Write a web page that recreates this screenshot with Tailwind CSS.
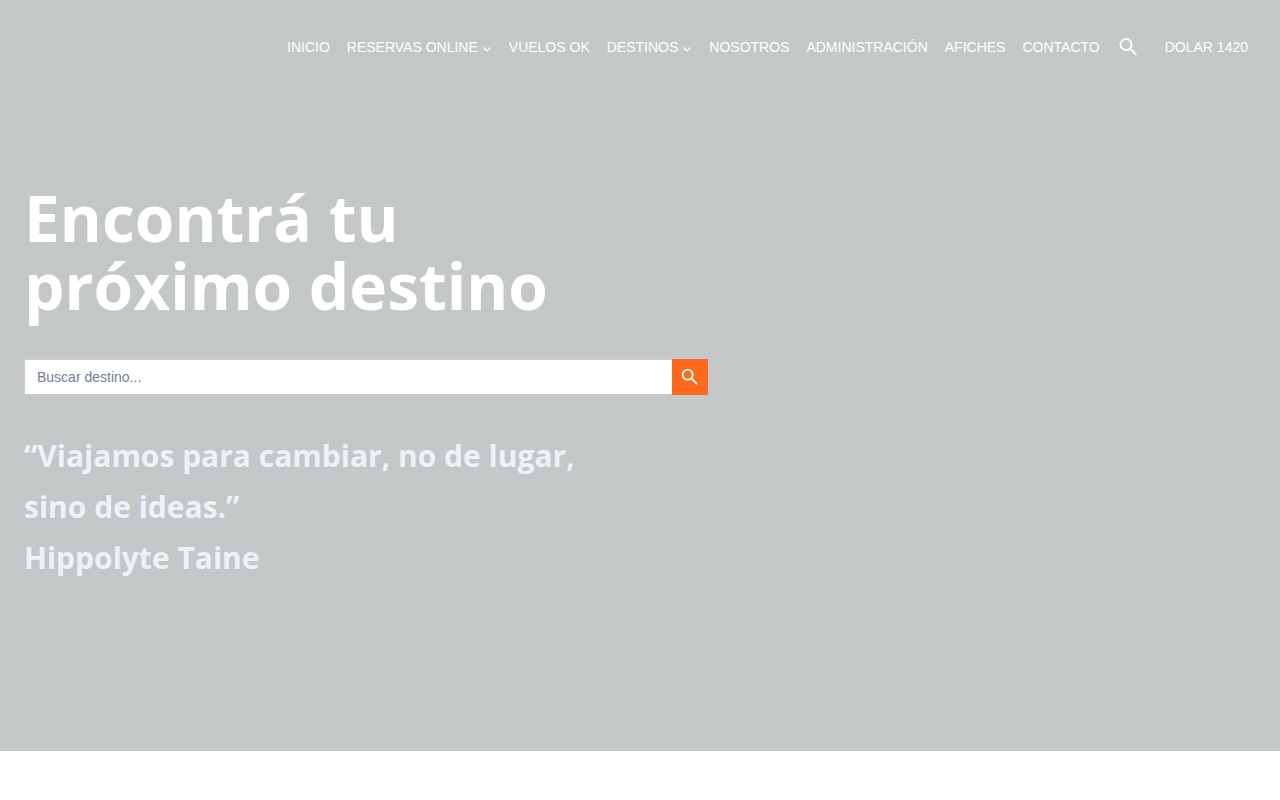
<!DOCTYPE html>
<html lang="es">
<head>
    <meta charset="UTF-8">
    <meta name="viewport" content="width=device-width, initial-scale=1.0">
    <title>Encontrá tu próximo destino</title>
    <script src="https://cdn.jsdelivr.net/npm/@tailwindcss/browser@4"></script>
</head>
<body class="bg-white font-['Liberation_Sans',Arial,sans-serif]">

<div class="bg-[#c3c7c8] pb-[168px]">
    <!-- Header -->
    <header class="flex justify-end px-8 pt-[29px]">
        <nav class="flex items-center h-9 gap-[17px] text-sm text-white whitespace-nowrap">
            <a href="#">INICIO</a>
            <a href="#" class="flex items-center gap-1">RESERVAS ONLINE
                <svg class="w-[10px] h-[11px] mt-1" viewBox="0 0 10 11" fill="none" stroke="currentColor" stroke-width="1.2"><path d="M1.5 3.5l3.5 3.5 3.5-3.5"/></svg>
            </a>
            <a href="#">VUELOS OK</a>
            <a href="#" class="flex items-center gap-1">DESTINOS
                <svg class="w-[10px] h-[11px] mt-1" viewBox="0 0 10 11" fill="none" stroke="currentColor" stroke-width="1.2"><path d="M1.5 3.5l3.5 3.5 3.5-3.5"/></svg>
            </a>
            <a href="#">NOSOTROS</a>
            <a href="#">ADMINISTRACIÓN</a>
            <a href="#">AFICHES</a>
            <a href="#">CONTACTO</a>
            <a href="#" aria-label="Buscar" class="mr-2">
                <svg class="w-[23px] h-6" viewBox="0 0 23 24" fill="currentColor"><path d="M15 14h-.79l-.28-.27A6.47 6.47 0 0 0 15.5 9.5 6.5 6.5 0 1 0 9 16c1.61 0 3.09-.59 4.23-1.57l.27.28v.79l5 4.99L19.99 19l-4.99-5zm-6 0C6.51 14 4.5 11.99 4.5 9.5S6.51 5 9 5s4.5 2.01 4.5 4.5S11.49 14 9 14z"/></svg>
            </a>
            <a href="#">DOLAR 1420</a>
        </nav>
    </header>

    <!-- Hero -->
    <main class="max-w-[732px] px-6 pt-[119px]">
        <h1 class="font-['Open_Sans','Noto_Sans',sans-serif] font-bold text-[64px] leading-[68px] text-white">Encontrá tu<br>próximo destino</h1>

        <form class="flex mt-[39px]">
            <input type="search" aria-label="Buscar destino" placeholder="Buscar destino..." class="flex-1 min-w-0 h-9 px-3 bg-white border border-[#cccccc] border-r-0 text-sm text-gray-700 placeholder:text-[#718096] outline-none">
            <button type="submit" aria-label="Buscar" class="flex items-center justify-center w-9 h-9 bg-[#ff691c] text-white">
                <svg class="w-[22px] h-[22px]" viewBox="0 0 24 24" fill="currentColor"><path d="M15.5 14h-.79l-.28-.27A6.47 6.47 0 0 0 16 9.5 6.5 6.5 0 1 0 9.5 16c1.61 0 3.09-.59 4.23-1.57l.27.28v.79l5 4.99L20.49 19l-4.99-5zm-6 0C7.01 14 5 11.99 5 9.5S7.01 5 9.5 5 14 7.01 14 9.5 11.99 14 9.5 14z"/></svg>
            </button>
        </form>

        <p class="mt-[35px] font-['Open_Sans','Noto_Sans',sans-serif] font-bold text-[30px] leading-[51px] text-[#edf2f7]">“Viajamos para cambiar, no de lugar,<br>sino de ideas.”<br>Hippolyte Taine</p>
    </main>
</div>

</body>
</html>
